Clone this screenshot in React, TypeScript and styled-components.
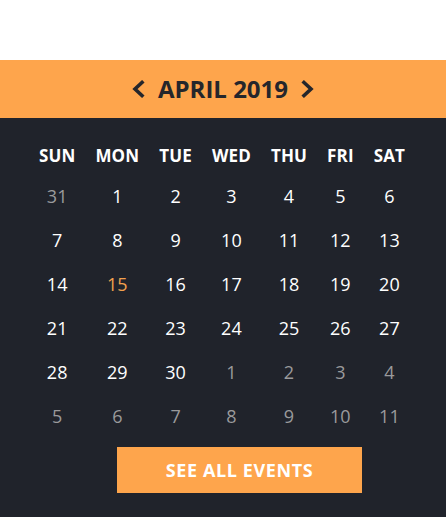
import React, {FC} from "react";
import styled, {createGlobalStyle} from "styled-components";

const GlobalStyle = createGlobalStyle`
  html, body {
    margin: 0;
    padding: 0;
    background: #ffffff;
    font-family: "Open Sans", "Liberation Sans", sans-serif;
  }
`

const Page = styled.div`
  padding-top: 60px;
  height: 517px;
  box-sizing: border-box;
  display: flex;
  flex-direction: column;
`

const MonthBar = styled.div`
  height: 58px;
  background: #fea54c;
  display: flex;
  align-items: center;
  justify-content: center;
  color: #25262b;
`

const MonthTitle = styled.h2`
  margin: 0 13px;
  font-size: 24px;
  font-weight: 700;
  line-height: 1;
`

const Arrow = styled.button`
  border: none;
  background: none;
  padding: 0;
  display: flex;
  cursor: pointer;
`

const Body = styled.div`
  flex: 1;
  background: #20232b;
  padding-top: 20px;
  display: flex;
  flex-direction: column;
  align-items: center;
`

const Table = styled.table`
  border-collapse: collapse;
  color: #ffffff;
  margin-left: -2px;
`

const HeadCell = styled.th`
  padding: 6px 10px;
  font-size: 17px;
  line-height: 24px;
  font-weight: 700;
  letter-spacing: 0.15px;
  text-align: center;
`

const DayCell = styled.td<{ tone?: "muted" | "today" }>`
  padding: 10px 10px;
  font-size: 18px;
  line-height: 24px;
  text-align: center;
  color: ${props => props.tone === "muted" ? "#9a9a9c" : props.tone === "today" ? "#f2a14e" : "#ffffff"};
`

const EventsButton = styled.button`
  margin: 9px 0 0 33px;
  width: 245px;
  height: 46px;
  border: none;
  background: #fea54c;
  color: #ffffff;
  font-family: "Open Sans", "Liberation Sans", sans-serif;
  font-size: 18px;
  font-weight: 700;
  letter-spacing: 0.6px;
  cursor: pointer;
`

const Chevron: FC<{dir: "left" | "right"}> = ({dir}) => (
  <svg width="14" height="18" viewBox="0 0 14 18">
    <polyline
      points={dir === "left" ? "11,2.5 4,9 11,15.5" : "3,2.5 10,9 3,15.5"}
      fill="none"
      stroke="#25262b"
      strokeWidth="3.6"
      strokeLinecap="square"
    />
  </svg>
)

const weekDays = ["SUN", "MON", "TUE", "WED", "THU", "FRI", "SAT"]

type Day = { n: number, tone?: "muted" | "today" }

// april 2019 starts on monday, grid is 6 weeks
const buildWeeks = (): Day[][] => {
  const days: Day[] = [{n: 31, tone: "muted"}]
  for (let i = 1; i <= 30; i++) {
    days.push({n: i, tone: i === 15 ? "today" : undefined})
  }
  let next = 1
  while (days.length < 42) {
    days.push({n: next++, tone: "muted"})
  }
  const weeks: Day[][] = []
  for (let i = 0; i < 6; i++) {
    weeks.push(days.slice(i * 7, i * 7 + 7))
  }
  return weeks
}

const App: FC = () => {
  const weeks = buildWeeks()

  return (
    <Page>
      <GlobalStyle/>
      <MonthBar>
        <Arrow aria-label="previous month"><Chevron dir="left"/></Arrow>
        <MonthTitle>APRIL 2019</MonthTitle>
        <Arrow aria-label="next month"><Chevron dir="right"/></Arrow>
      </MonthBar>
      <Body>
        <Table>
          <thead>
          <tr>
            {weekDays.map(d => <HeadCell key={d}>{d}</HeadCell>)}
          </tr>
          </thead>
          <tbody>
          {weeks.map((week, wi) => (
            <tr key={`week-${wi}`}>
              {week.map((day, di) => (
                <DayCell key={`day-${wi}-${di}`} tone={day.tone}>{day.n}</DayCell>
              ))}
            </tr>
          ))}
          </tbody>
        </Table>
        <EventsButton>SEE ALL EVENTS</EventsButton>
      </Body>
    </Page>
  )
}

export default App;
